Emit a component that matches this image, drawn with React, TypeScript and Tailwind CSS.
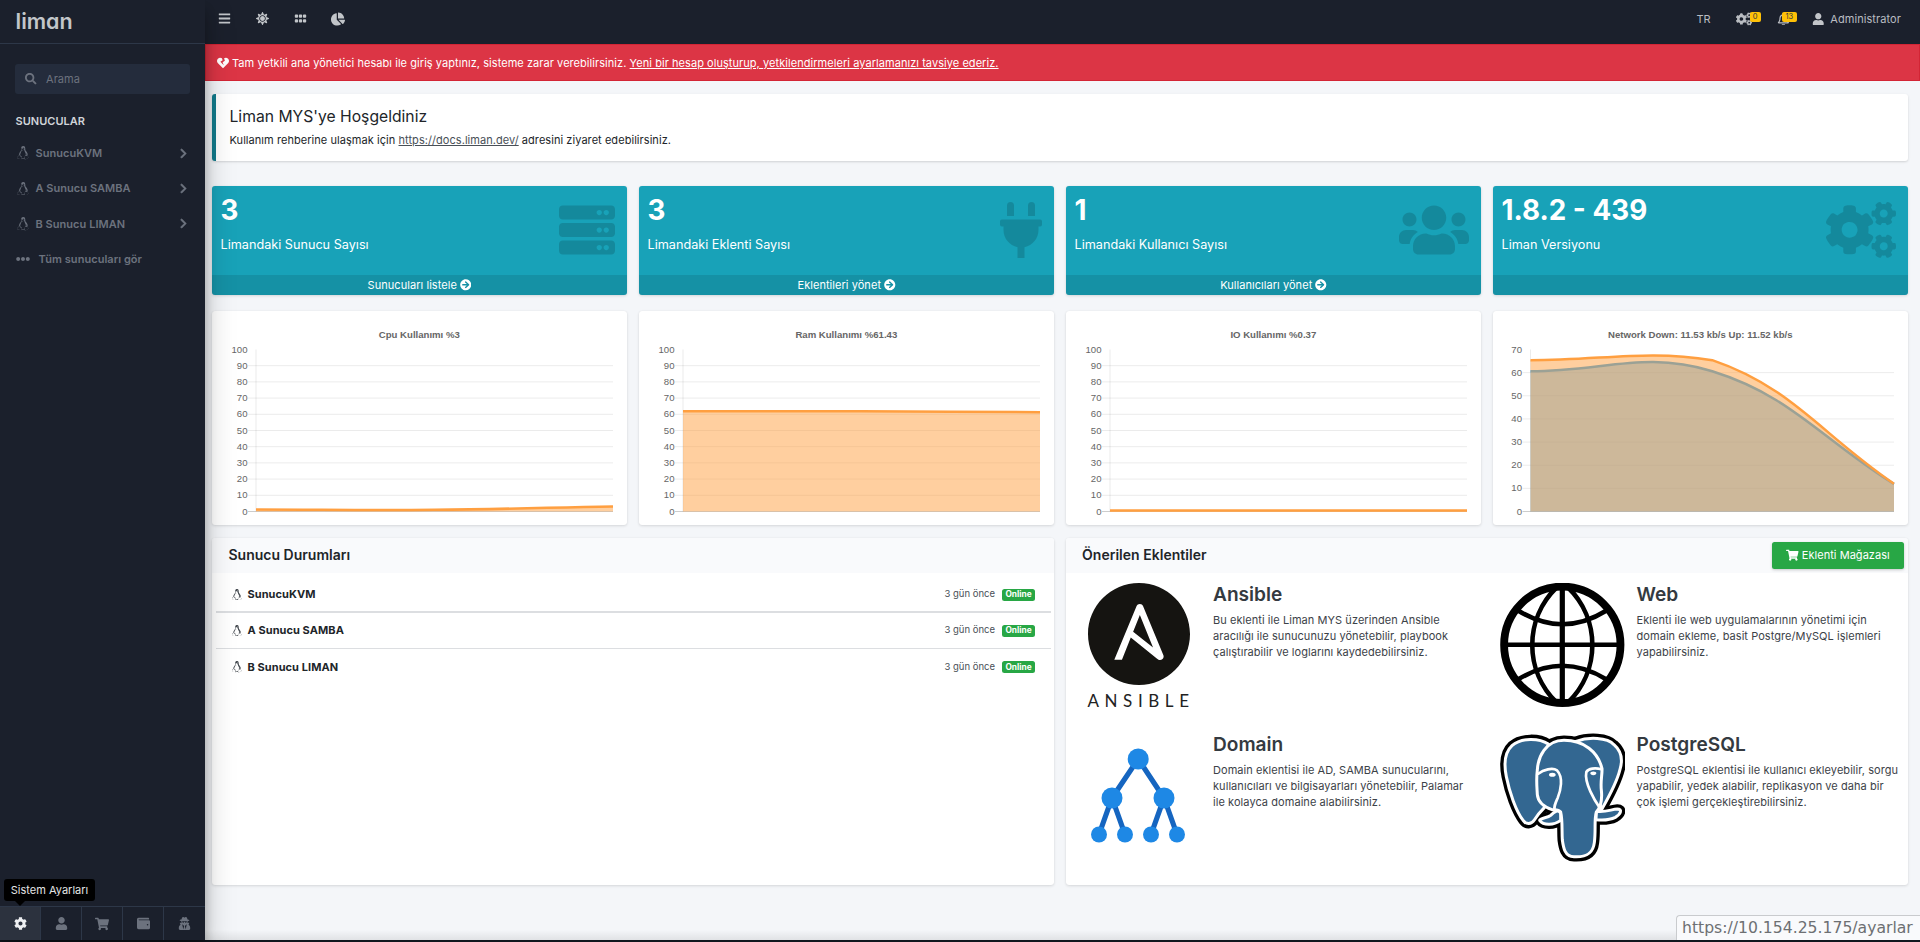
import React from "react";
import type { ReactNode } from "react";
import {
  FaArrowCircleRight, FaBars, FaChartPie, FaChevronRight, FaCog, FaCogs, FaEllipsisH,
  FaGripHorizontal, FaHeartBroken, FaLinux, FaPlug, FaRegBell, FaSearch, FaServer,
  FaShoppingCart, FaSun, FaUser, FaUsers, FaUserSecret, FaWallet,
} from "react-icons/fa";
import { SiAnsible } from "react-icons/si";

const servers = ["SunucuKVM", "A Sunucu SAMBA", "B Sunucu LIMAN"];

function Sidebar() {
  return (
    <aside className="relative z-20 flex w-[205px] shrink-0 flex-col bg-[#1b202c] text-[#6c727e] shadow-[0_14px_28px_rgba(0,0,0,0.25),0_10px_10px_rgba(0,0,0,0.22)]">
      <div className="h-11 border-b border-[#2d3748] pl-[15.5px] text-[21.5px] leading-[42px] font-semibold text-[#c3c6ca] [font-feature-settings:'cv11']">
        liman
      </div>
      <div className="mx-[15px] mt-5 flex h-[30px] items-center rounded-[3px] bg-[#242c3c] pl-[10px]">
        <FaSearch className="text-[11.5px]" />
        <span className="ml-[9.5px] text-[11px] tracking-[0.07px]">Arama</span>
      </div>
      <div className="mt-[19px] pl-[15.5px] text-[11px] leading-4 font-semibold tracking-[0.03px] text-[#d0d4d9]">SUNUCULAR</div>
      <nav className="mt-[6.6px] text-[11px] font-semibold tracking-[0.04px]">
        {servers.map((s) => (
          <div key={s} className="flex h-[35.3px] items-center pr-[16px] pl-4">
            <FaLinux className="w-[14px] text-[13.5px]" />
            <span className="ml-[5.5px] flex-1">{s}</span>
            <FaChevronRight className="text-[11px]" stroke="currentColor" strokeWidth="20" />
          </div>
        ))}
        <div className="flex h-[35.3px] items-center pl-4">
          <FaEllipsisH className="text-[14px]" />
          <span className="ml-[8.5px]">Tüm sunucuları gör</span>
        </div>
      </nav>
      <div className="mt-auto grid h-[34px] grid-cols-5 border-t border-[#2d3748] text-[13px]">
        <div className="flex items-center justify-center border-r border-[#2d3748] bg-[#2c323e] text-[#eef0f2]"><FaCog /></div>
        <div className="flex items-center justify-center border-r border-[#2d3748]"><FaUser /></div>
        <div className="flex items-center justify-center border-r border-[#2d3748] text-[14px]"><FaShoppingCart /></div>
        <div className="flex items-center justify-center border-r border-[#2d3748]"><FaWallet /></div>
        <div className="flex items-center justify-center"><FaUserSecret /></div>
      </div>
      <div className="absolute bottom-[39px] left-1 flex h-[22px] w-[91px] items-center justify-center rounded-[3px] bg-black text-[11px] text-[#e4e4e4]">
        Sistem Ayarları
        <div className="absolute top-full left-[11px] border-x-[5px] border-t-[5px] border-x-transparent border-t-black" />
      </div>
    </aside>
  );
}

function Header() {
  return (
    <header className="flex h-11 items-start justify-between bg-[#1b202c] text-[#c2c5c9]">
      <div className="flex h-[37px] items-center pl-[13px]">
        <FaBars className="mr-[25px] text-[13px]" />
        <FaSun className="mr-[25px] text-[13px]" />
        <FaGripHorizontal className="mr-[24px] text-[13px]" />
        <FaChartPie className="text-[14px]" />
      </div>
      <div className="flex h-[38px] items-center pr-[19px] text-[11px] tracking-[0.08px] text-[#b9bcc1]">
        <span>TR</span>
        <div className="relative ml-[25px] w-4">
          <FaCogs className="text-[16px]" />
          <span className="absolute top-[1px] left-[14px] flex h-[10px] w-[11px] items-center justify-center rounded-[2px] bg-[#ffc107] text-[7.5px] tracking-normal text-[#343a40]">0</span>
        </div>
        <div className="relative ml-[25px] w-3">
          <FaRegBell className="text-[12.8px]" />
          <span className="absolute top-[-1px] left-[5px] flex h-[10px] w-[15px] items-center justify-center rounded-[2px] bg-[#ffc107] text-[7.5px] tracking-normal text-[#343a40]">13</span>
        </div>
        <FaUser className="ml-[23px] text-[12.5px] text-[#c2c5c9]" />
        <span className="ml-[6px]">Administrator</span>
      </div>
    </header>
  );
}

function StatCard({ value, label, icon, action }: { value: string; label: string; icon: ReactNode; action?: string }) {
  return (
    <div className="flex h-[109px] flex-col overflow-hidden rounded-[3px] bg-[#18a2b8] text-white shadow-[0_0_1px_rgba(0,0,0,0.08),0_1px_3px_rgba(0,0,0,0.12)]">
      <div className="flex flex-1 items-start justify-between pr-3 pl-[8.5px]">
        <div>
          <div className="mt-[7px] text-[27.8px] leading-[34px] font-bold">{value}</div>
          <div className="mt-[9px] text-[12.67px] leading-[18px]">{label}</div>
        </div>
        <div className="flex h-[88px] items-center text-black/15">{icon}</div>
      </div>
      <div className="flex h-5 items-center justify-center gap-[3px] bg-black/10 text-[11px] tracking-[0.05px]">
        {action && <><span>{action}</span><FaArrowCircleRight className="text-[11.5px]" /></>}
      </div>
    </div>
  );
}

type Pt = { x: number; y: number };

/* Smooth curve through three or more points; control points stay inside the plot's height. */
function splinePath(points: Pt[], top: number, bottom: number) {
  const t = 0.4;
  const clamp = (y: number) => Math.max(top, Math.min(bottom, y));
  const ctl = points.map((p, i) => {
    const a = points[i - 1] ?? p;
    const b = points[i + 1] ?? p;
    const d1 = Math.hypot(p.x - a.x, p.y - a.y);
    const d2 = Math.hypot(b.x - p.x, b.y - p.y);
    const fa = (t * d1) / (d1 + d2);
    const fb = (t * d2) / (d1 + d2);
    return {
      prev: { x: p.x - fa * (b.x - a.x), y: clamp(p.y - fa * (b.y - a.y)) },
      next: { x: p.x + fb * (b.x - a.x), y: clamp(p.y + fb * (b.y - a.y)) },
    };
  });
  return points
    .map((p, i) =>
      i === 0
        ? `M${p.x} ${p.y}`
        : `C${ctl[i - 1].next.x} ${ctl[i - 1].next.y} ${ctl[i].prev.x} ${ctl[i].prev.y} ${p.x} ${p.y}`
    )
    .join(" ");
}

function Chart({ title, max, left = 44, series }: { title: string; max: number; left?: number; series: { data: number[]; color: string }[] }) {
  const top = 38.5;
  const bottom = 200.5;
  const right = 401;
  const ticks = Array.from({ length: max / 10 + 1 }, (_, i) => i * 10);
  const yOf = (v: number) => bottom - (v / max) * (bottom - top);
  return (
    <div className="h-[214px] rounded-[3px] bg-white shadow-[0_0_1px_rgba(0,0,0,0.08),0_1px_3px_rgba(0,0,0,0.12)]">
      <svg width="415" height="214" viewBox="0 0 415 214" className="block font-['Liberation_Sans',sans-serif] text-[9.6px]">
        <text x="207.3" y="27" textAnchor="middle" fontWeight="700" fill="#666">{title}</text>
        {ticks.map((v) => (
          <g key={v}>
            {v < max && (
              <line x1={left - 8} x2={right} y1={yOf(v)} y2={yOf(v)} stroke="#000" strokeOpacity={v === 0 ? 0.25 : 0.1} strokeWidth="0.8" />
            )}
            <text x={left - 8.5} y={yOf(v) + 3} textAnchor="end" fill="#666">{v}</text>
          </g>
        ))}
        <line x1={left} x2={left} y1={top} y2={bottom} stroke="#000" strokeOpacity="0.1" strokeWidth="0.8" />
        {series.map((s) => {
          const pts = s.data.map((v, i) => ({ x: left + ((right - left) * i) / (s.data.length - 1), y: yOf(v) }));
          const d = splinePath(pts, top, bottom);
          return (
            <g key={s.color}>
              <path d={`${d} L${right} ${bottom} L${left} ${bottom}Z`} fill={s.color} fillOpacity="0.5" />
              <path d={d} fill="none" stroke={s.color} strokeWidth="2.5" />
            </g>
          );
        })}
      </svg>
    </div>
  );
}

function AnsibleLogo() {
  return (
    <div className="flex h-[125px] w-[125px] flex-col items-center">
      <SiAnsible className="shrink-0 text-[102px] text-[#151411]" />
      <span className="mt-[6px] -mr-[5px] font-[Lato,sans-serif] text-[17px] leading-[20px] tracking-[5.6px] text-[#222]">ANSIBLE</span>
    </div>
  );
}

function GlobeLogo() {
  return (
    <svg width="125" height="125" viewBox="0 0 125 125" fill="none" stroke="#000" strokeWidth="4.6">
      <circle cx="62.3" cy="61.8" r="58.2" strokeWidth="7.8" />
      <path d="M62.3 4v116" strokeWidth="5.2" />
      <path d="M4 61.8h116" />
      <path d="M57 4C24 36 24 88 57 120M67.6 4c33 32 33 84 0 116" />
      <path d="M18 27.5Q62.3 55 106.6 27.5M18 96.5Q62.3 69 106.6 96.5" />
    </svg>
  );
}

function DomainLogo() {
  return (
    <svg width="125" height="125" viewBox="0 0 125 125">
      <path d="M62.2 26L36 65L23 101.5M36 65L49 101.5M62.2 26L88 65L75 101.5M88 65L101 101.5" fill="none" stroke="#1565c0" strokeWidth="5.2" />
      <g fill="#1e88e5">
        <circle cx="62.2" cy="26" r="10.5" />
        <circle cx="36" cy="65" r="10.5" />
        <circle cx="88" cy="65" r="10.5" />
        <circle cx="23" cy="101.5" r="8" />
        <circle cx="49" cy="101.5" r="8" />
        <circle cx="75" cy="101.5" r="8" />
        <circle cx="101" cy="101.5" r="8" />
      </g>
    </svg>
  );
}

const elephantParts = [
  "M155 42C128 24 74 22 46 47C20 71 23 110 29 140C38 186 58 244 80 272C88 284 104 284 113 270C122 256 132 244 143 233L150 140Z",
  "M238 34C276 20 332 22 352 44C377 66 378 92 370 118C362 152 338 198 314 240L290 130Z",
  "M299 244C328 248 344 238 362 237C378 237 373 252 356 262C338 271 318 271 298 269Z",
  "M192 250C185 236 172 246 162 256C152 265 134 262 129 271C140 287 172 286 192 271Z",
  "M122 120C124 82 146 31 202 31C262 31 304 66 316 116C317 134 311 152 314 180C317 208 312 232 299 246C292 270 298 300 293 338C289 372 268 382 232 380C204 380 200 352 197 330C195 300 198 270 192 246C186 238 176 240 166 239C146 232 124 218 122 194C121 174 118 150 122 120Z",
];

function PostgresLogo() {
  return (
    <svg width="125" height="129" viewBox="10 9 375 387" strokeLinejoin="round" strokeLinecap="round">
      <g fill="#000" stroke="#000" strokeWidth="29">
        {elephantParts.map((d) => <path key={d} d={d} />)}
      </g>
      <g fill="#336791" stroke="#fff" strokeWidth="9">
        {elephantParts.map((d) => <path key={d} d={d} />)}
      </g>
      <g fill="none" stroke="#fff" strokeWidth="8">
        <path d="M125 131C140 119 168 112 181 121C201 142 192 182 183 204C175 222 171 230 174 241" />
        <path d="M314 118C296 113 275 115 269 126C262 158 294 212 311 236" />
      </g>
      <ellipse cx="167" cy="134" rx="10" ry="6" fill="#fff" />
      <ellipse cx="290" cy="130" rx="9" ry="5.5" fill="#fff" />
    </svg>
  );
}

function Plugin({ logo, name, text }: { logo: ReactNode; name: string; text: string }) {
  return (
    <div className="flex h-[150px] items-start">
      <div className="w-[125px] shrink-0">{logo}</div>
      <div className="ml-[12px] w-[263px]">
        <h4 className="text-[19.1px] leading-[23px] font-semibold text-[#343a40]">{name}</h4>
        <p className="mt-[6px] text-[11px] leading-4 tracking-[0.06px] text-[#3c4248]">{text}</p>
      </div>
    </div>
  );
}

export default function App() {
  return (
    <div className="flex h-[942px] w-[1920px] flex-col overflow-hidden bg-[#10161e] font-[Inter,sans-serif] text-[#212529]">
      <div className="flex h-[940px]">
        <Sidebar />
        <div className="relative flex w-[1715px] flex-col bg-[#f4f6f9]">
          <Header />
          <div className="flex h-[37px] items-center border border-[#d32535] bg-[#dc3545] pt-px pl-[11px] text-[11px] tracking-[0.055px] text-white">
            <FaHeartBroken className="text-[12px]" />
            <span className="ml-[3px]">
              Tam yetkili ana yönetici hesabı ile giriş yaptınız, sisteme zarar verebilirsiniz.{" "}
              <span className="underline">Yeni bir hesap oluşturup, yetkilendirmeleri ayarlamanızı tavsiye ederiz.</span>
            </span>
          </div>
          <main className="pr-3 pl-[7px]">
            <section className="mt-[13px] h-[67px] rounded-[3px] border-l-4 border-[#117a8b] bg-white pt-3 pl-[13.5px] shadow-[0_1px_3px_rgba(0,0,0,0.1),0_1px_2px_rgba(0,0,0,0.06)]">
              <h5 className="text-[15.7px] leading-[21px]">Liman MYS'ye Hoşgeldiniz</h5>
              <p className="mt-[5px] text-[11px] leading-4 tracking-[0.055px]">
                Kullanım rehberine ulaşmak için <span className="text-[#495057] underline">https://docs.liman.dev/</span> adresini ziyaret edebilirsiniz.
              </p>
            </section>
            <section className="mt-[25px] grid grid-cols-4 gap-3">
              <StatCard value="3" label="Limandaki Sunucu Sayısı" action="Sunucuları listele" icon={<FaServer className="text-[56px]" />} />
              <StatCard value="3" label="Limandaki Eklenti Sayısı" action="Eklentileri yönet" icon={<FaPlug className="-mr-[7px] text-[56px]" />} />
              <StatCard value="1" label="Limandaki Kullanıcı Sayısı" action="Kullanıcıları yönet" icon={<FaUsers className="text-[70px]" />} />
              <StatCard value="1.8.2 - 439" label="Liman Versiyonu" icon={<FaCogs className="text-[70px]" />} />
            </section>
            <section className="mt-4 grid grid-cols-4 gap-3">
              <Chart title="Cpu Kullanımı %3" max={100} series={[{ data: [1.3, 1.1, 3.1], color: "#ff9f40" }]} />
              <Chart title="Ram Kullanımı %61.43" max={100} series={[{ data: [61.9, 61.9, 61.3], color: "#ff9f40" }]} />
              <Chart title="IO Kullanımı %0.37" max={100} series={[{ data: [0.6, 0.6, 0.6], color: "#ff9f40" }]} />
              <Chart
                title="Network Down: 11.53 kb/s Up: 11.52 kb/s"
                max={70}
                left={37.5}
                series={[
                  { data: [60.6, 60.6, 11.9], color: "#36a2eb" },
                  { data: [65.4, 65.4, 12], color: "#ff9f40" },
                ]}
              />
            </section>
            <section className="mt-[13px] grid grid-cols-2 gap-3">
              <div className="h-[347px] overflow-hidden rounded-[3px] bg-white shadow-[0_0_1px_rgba(0,0,0,0.08),0_1px_3px_rgba(0,0,0,0.12)]">
                <h3 className="h-[35px] bg-[#f9fafc] pl-[16.5px] text-[14px] leading-[34px] font-semibold">Sunucu Durumları</h3>
                <div className="pr-[3px] pl-1">
                  {servers.map((s, i) => (
                    <div
                      key={s}
                      className={
                        i === 0
                          ? "flex h-[40px] items-center border-b-2 border-[#dcdee1] pt-[5px] pr-4 pl-[15px]"
                          : i === 1
                            ? "flex h-[36px] items-center border-b border-[#dcdee1] pr-4 pl-[15px]"
                            : "flex h-[36px] items-center pr-4 pl-[15px]"
                      }
                    >
                      <FaLinux className="text-[11.5px] text-[#343a40]" />
                      <span className="ml-[5px] flex-1 text-[11px] font-bold tracking-[0.07px]">{s}</span>
                      <span className="text-[9.5px] text-[#495057]">3 gün önce</span>
                      <span className="ml-[7px] flex h-3 w-[33px] items-center justify-center rounded-[2.5px] bg-[#28a745] text-[8.3px] font-bold text-white">Online</span>
                    </div>
                  ))}
                </div>
              </div>
              <div className="h-[347px] overflow-hidden rounded-[3px] bg-white shadow-[0_0_1px_rgba(0,0,0,0.08),0_1px_3px_rgba(0,0,0,0.12)]">
                <div className="flex h-[35px] items-start justify-between bg-[#f9fafc] pr-1 pl-4">
                  <h3 className="text-[14px] leading-[34px] font-semibold tracking-[0.03px]">Önerilen Eklentiler</h3>
                  <button className="mt-1 flex h-[27px] w-[132px] items-center justify-center gap-[3px] rounded-[2.5px] bg-[#28a745] text-[11px] tracking-[0.04px] text-white shadow-[0_1px_3px_rgba(0,0,0,0.2)]">
                    <FaShoppingCart className="text-[12.5px]" />
                    <span>Eklenti Mağazası</span>
                  </button>
                </div>
                <div className="grid grid-cols-[423.5px_minmax(0,1fr)] pt-[10px] pl-[10px]">
                  <Plugin logo={<AnsibleLogo />} name="Ansible" text="Bu eklenti ile Liman MYS üzerinden Ansible aracılığı ile sunucunuzu yönetebilir, playbook çalıştırabilir ve loglarını kaydedebilirsiniz." />
                  <Plugin logo={<GlobeLogo />} name="Web" text="Eklenti ile web uygulamalarının yönetimi için domain ekleme, basit Postgre/MySQL işlemleri yapabilirsiniz." />
                  <Plugin logo={<DomainLogo />} name="Domain" text="Domain eklentisi ile AD, SAMBA sunucularını, kullanıcıları ve bilgisayarları yönetebilir, Palamar ile kolayca domaine alabilirsiniz." />
                  <Plugin logo={<PostgresLogo />} name="PostgreSQL" text="PostgreSQL eklentisi ile kullanıcı ekleyebilir, sorgu yapabilir, yedek alabilir, replikasyon ve daha bir çok işlemi gerçekleştirebilirsiniz." />
                </div>
              </div>
            </section>
          </main>
          <div className="absolute inset-x-0 bottom-0 h-[10px] bg-linear-to-t from-black/8 to-transparent" />
          <div className="absolute right-0 bottom-0 flex h-[25px] w-[244px] items-center rounded-tl-[4px] border-t border-l border-[#c9cbce] bg-[#f9fafc] pl-[5px] font-['DejaVu_Sans',sans-serif] text-[15.64px] text-[#6d7073]">
            https://10.154.25.175/ayarlar
          </div>
        </div>
      </div>
    </div>
  );
}
